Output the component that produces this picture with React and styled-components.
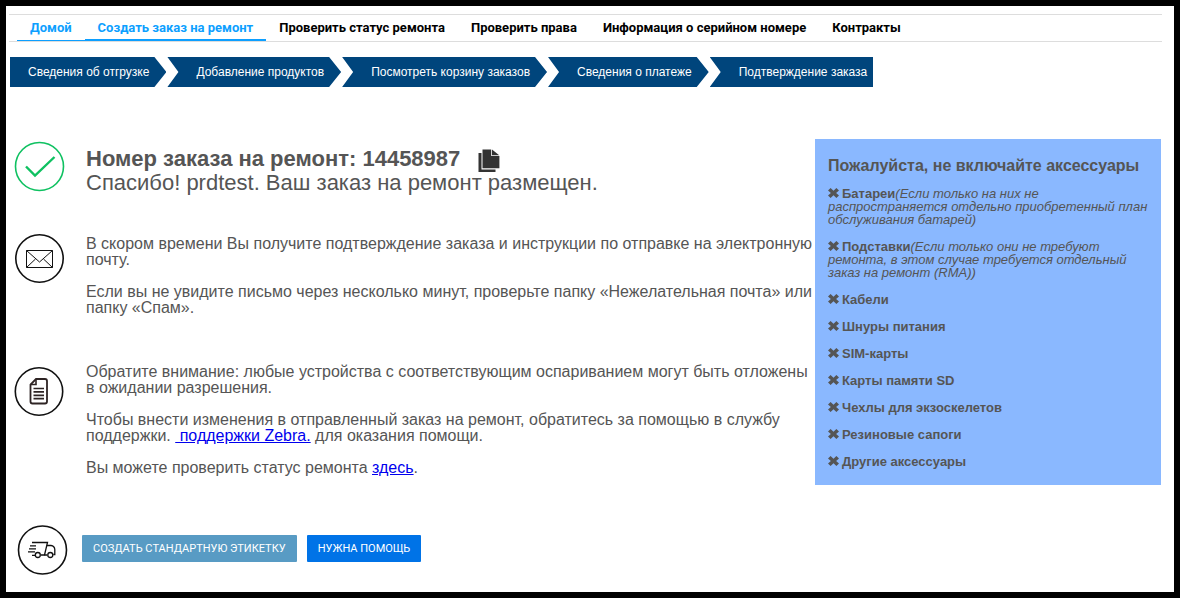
import React from 'react';
import styled, { createGlobalStyle } from 'styled-components';

const GlobalStyle = createGlobalStyle`
  * { box-sizing: border-box; }
  body {
    margin: 0;
    background: #000;
    font-family: "Liberation Sans", Arial, sans-serif;
    color: #555;
  }
  p, h1, h2, ul { margin: 0; padding: 0; }
`;

const Page = styled.div`
  min-height: 100vh;
  background: #fff;
  border: 6px solid #000;
  padding: 8px 12px 0 3px;
`;

const Nav = styled.nav`
  display: flex;
  height: 28px;
  padding-left: 8px;
  border-top: 1px solid #ddd;
  border-bottom: 1px solid #ddd;
`;

const NavLink = styled.a`
  padding: 0 13px;
  font-family: Roboto, sans-serif;
  font-size: 13px;
  font-weight: 700;
  line-height: 26px;
  white-space: nowrap;
  text-decoration: none;
  color: ${(props) => (props.$line ? '#0d9fff' : '#000')};
  box-shadow: inset 0 -${(props) => props.$line || 0}px 0 #0d9fff;
`;

const Steps = styled.ol`
  display: flex;
  list-style: none;
  margin: 15px 0 0 1px;
  padding: 0;
  gap: 1px;
`;

const Step = styled.li`
  height: 30px;
  padding: 0 17px 0 29px;
  background: #00457c;
  color: #fff;
  font-size: 12px;
  line-height: 30px;
  white-space: nowrap;
  clip-path: polygon(0 0, calc(100% - 12px) 0, 100% 50%, calc(100% - 12px) 100%, 0 100%, 11px 50%);

  &:first-child {
    padding-left: 18px;
    clip-path: polygon(0 0, calc(100% - 12px) 0, 100% 50%, calc(100% - 12px) 100%, 0 100%);
  }
  &:last-child {
    padding-right: 6px;
    clip-path: polygon(0 0, 100% 0, 100% 100%, 0 100%, 11px 50%);
  }
`;

const Content = styled.main`
  display: flex;
  align-items: flex-start;
  margin-top: 52px;
  padding: 0 1px 0 5px;
`;

const Details = styled.div`
  flex: 1;
  min-width: 0;
`;

const Row = styled.section`
  display: flex;
  align-items: flex-start;
  gap: 22px;
  margin-top: ${(props) => props.$top}px;
`;

const Icon = styled.svg`
  flex: none;
  width: 50px;
  height: 50px;
  margin-top: ${(props) => (props.$low ? 5 : 0)}px;
  overflow: visible;
  fill: none;
  stroke: ${(props) => (props.$green ? '#0fc161' : '#111')};
`;

const Heading = styled.div`
  padding-top: 6px;
  font-size: 22px;
  line-height: 24px;
`;

const OrderTitle = styled.h1`
  display: flex;
  align-items: center;
  gap: 18px;
  height: 24px;
  font-size: 22px;
  line-height: 24px;
`;

const CopyButton = styled.button`
  display: flex;
  padding: 3px 0 0;
  border: 0;
  background: none;
`;

const Text = styled.div`
  flex: 1;
  min-width: 0;
  padding-top: 2px;
  font-size: 16px;
  line-height: 16px;

  p + p { margin-top: 16px; }
  a { color: #00e; }
`;

const Actions = styled.div`
  display: flex;
  align-items: flex-start;
  gap: 15px;
  margin-top: 49px;
  padding-left: 3px;
`;

const Buttons = styled.div`
  display: flex;
  gap: 10px;
  padding-top: 10px;
`;

const Button = styled.button`
  height: 27px;
  padding: 0 11px;
  border: 0;
  border-radius: 1px;
  background: ${(props) => (props.$primary ? '#0073e7' : '#589bc4')};
  color: #fff;
  font-family: Roboto, sans-serif;
  font-size: 11px;
  white-space: nowrap;
`;

const Notice = styled.aside`
  flex: none;
  width: 346px;
  padding: 18px 4px 17px 13px;
  background: #8ab8ff;
`;

const NoticeTitle = styled.h2`
  font-size: 16px;
  line-height: 18px;
`;

const List = styled.ul`
  margin-top: 12px;
  list-style: none;
  font-size: 13px;
  line-height: 13px;
`;

const Item = styled.li`
  & + & { margin-top: 14px; }

  svg {
    width: 11px;
    height: 10px;
    margin-right: 3px;
    fill: #555;
  }
`;

const navItems = [
  { label: 'Домой', line: 1 },
  { label: 'Создать заказ на ремонт', line: 2 },
  { label: 'Проверить статус ремонта' },
  { label: 'Проверить права' },
  { label: 'Информация о серийном номере' },
  { label: 'Контракты' },
];

const steps = [
  'Сведения об отгрузке',
  'Добавление продуктов',
  'Посмотреть корзину заказов',
  'Сведения о платеже',
  'Подтверждение заказа',
];

const accessories = [
  { name: 'Батареи', note: '(Если только на них не распространяется отдельно приобретенный план обслуживания батарей)' },
  { name: 'Подставки', note: '(Если только они не требуют ремонта, в этом случае требуется отдельный заказ на ремонт (RMA))' },
  { name: 'Кабели' },
  { name: 'Шнуры питания' },
  { name: 'SIM-карты' },
  { name: 'Карты памяти SD' },
  { name: 'Чехлы для экзоскелетов' },
  { name: 'Резиновые сапоги' },
  { name: 'Другие аксессуары' },
];

const CheckIcon = () => (
  <Icon $green viewBox="0 0 50 50" aria-hidden="true">
    <circle cx="25.5" cy="25.5" r="24" strokeWidth="1.6" />
    <path d="M12 25.500L21 34.500L40.500 16" strokeWidth="2.4" />
  </Icon>
);

const MailIcon = () => (
  <Icon viewBox="0 0 50 50" aria-hidden="true">
    <circle cx="25.5" cy="24.5" r="23.7" strokeWidth="1.6" />
    <path d="M12.500 16.500H38.500V33.500H12.500Z M12.500 16.500L25.500 28L38.500 16.500 M12.500 33.500L21.500 25 M38.500 33.500L29.500 25" strokeWidth="1" />
  </Icon>
);

const DocumentIcon = () => (
  <Icon $low viewBox="0 0 50 50" aria-hidden="true">
    <circle cx="25" cy="24.5" r="23.7" strokeWidth="1.6" />
    <g stroke="#2e2424">
      <path d="M22 12H31Q33 12 33 14V34.500Q33 36.500 31 36.500H18.500Q16.500 36.500 16.500 34.500V17.500Z" strokeWidth="1.8" />
      <path d="M22 12V17.500H16.500" strokeWidth="1.6" />
      <path d="M19.500 21.500H30M19.500 24.900H30M19.500 28.300H30M19.500 31.700H30" strokeWidth="1.7" />
    </g>
  </Icon>
);

const TruckIcon = () => (
  <Icon viewBox="0 0 50 50" aria-hidden="true">
    <circle cx="25.5" cy="25" r="24" strokeWidth="1.6" />
    <g strokeWidth="1.3">
      <path d="M15 17.500H30.500L27.500 30H24M13 20.800H19M12 23.900H19M11 26.800H18M15 30.300H18" />
      <path d="M29.700 20.500H34Q37.500 21 37.800 24.500V29.500H36.300M27.500 30H30.300" />
      <circle cx="20.8" cy="30" r="2.5" />
      <circle cx="33.3" cy="30" r="2.5" />
    </g>
  </Icon>
);

const CopyIcon = () => (
  <svg width="22" height="24" viewBox="0 0 22 24" fill="#333" aria-hidden="true">
    <path d="M4.500 0.500H13.200V7H21.400V19.300H4.500Z" />
    <path d="M14 0.500L21.200 6.300H14Z" />
    <path d="M0.500 4H3.500V20.500H17.500V23H0.500Z" />
  </svg>
);

const CrossIcon = () => (
  <svg viewBox="0 0 11 10" aria-hidden="true">
    <path d="M2.600 0L5.500 2.700L8.400 0L11 2.400L8.100 5L11 7.600L8.400 10L5.500 7.300L2.600 10L0 7.600L2.900 5L0 2.400Z" />
  </svg>
);

export default function App() {
  return (
    <>
      <GlobalStyle />
      <Page>
        <Nav>
          {navItems.map((item) => (
            <NavLink key={item.label} href="#" $line={item.line}>{item.label}</NavLink>
          ))}
        </Nav>

        <Steps>
          {steps.map((step) => (
            <Step key={step}>{step}</Step>
          ))}
        </Steps>

        <Content>
          <Details>
            <Row $top={2}>
              <CheckIcon />
              <Heading>
                <OrderTitle>
                  Номер заказа на ремонт: 14458987
                  <CopyButton type="button" aria-label="Копировать"><CopyIcon /></CopyButton>
                </OrderTitle>
                <p>Спасибо! prdtest. Ваш заказ на ремонт размещен.</p>
              </Heading>
            </Row>

            <Row $top={39}>
              <MailIcon />
              <Text>
                <p>В скором времени Вы получите подтверждение заказа и инструкции по отправке на электронную почту.</p>
                <p>Если вы не увидите письмо через несколько минут, проверьте папку «Нежелательная почта» или папку «Спам».</p>
              </Text>
            </Row>

            <Row $top={46}>
              <DocumentIcon />
              <Text>
                <p>Обратите внимание: любые устройства с соответствующим оспариванием могут быть отложены в ожидании разрешения.</p>
                <p>
                  Чтобы внести изменения в отправленный заказ на ремонт, обратитесь за помощью в службу поддержки.{' '}
                  <a href="#">&nbsp;поддержки Zebra.</a> для оказания помощи.
                </p>
                <p>Вы можете проверить статус ремонта <a href="#">здесь</a>.</p>
              </Text>
            </Row>

            <Actions>
              <TruckIcon />
              <Buttons>
                <Button type="button">СОЗДАТЬ СТАНДАРТНУЮ ЭТИКЕТКУ</Button>
                <Button type="button" $primary>НУЖНА ПОМОЩЬ</Button>
              </Buttons>
            </Actions>
          </Details>

          <Notice>
            <NoticeTitle>Пожалуйста, не включайте аксессуары</NoticeTitle>
            <List>
              {accessories.map((item) => (
                <Item key={item.name}>
                  <CrossIcon />
                  <strong>{item.name}</strong>
                  {item.note && <em>{item.note}</em>}
                </Item>
              ))}
            </List>
          </Notice>
        </Content>
      </Page>
    </>
  );
}
